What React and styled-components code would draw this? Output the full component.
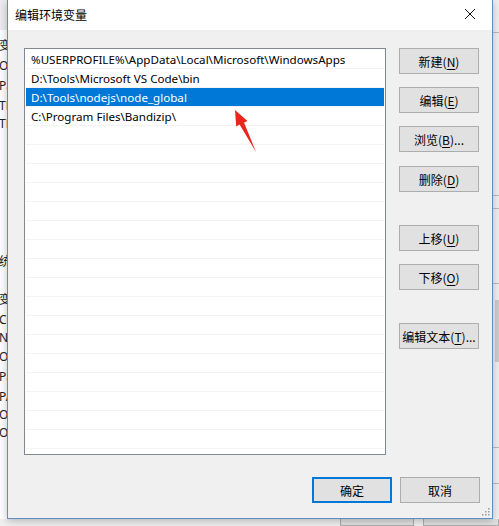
import React from 'react';
import styled, { createGlobalStyle } from 'styled-components';

const Global = createGlobalStyle`
  html, body { margin: 0; padding: 0; }
  body {
    width: 499px;
    height: 526px;
    overflow: hidden;
    background: #f0f0f0;
    font-family: "Noto Sans", "Noto Sans CJK SC", sans-serif;
  }
`;

const PATHS = [
  '%USERPROFILE%\\AppData\\Local\\Microsoft\\WindowsApps',
  'D:\\Tools\\Microsoft VS Code\\bin',
  'D:\\Tools\\nodejs\\node_global',
  'C:\\Program Files\\Bandizip\\',
];

// fragments of the window behind the dialog, cut by the dialog's left edge
const SIDE_TEXT = [
  { top: 38, t: '变' }, { top: 58, t: 'O' }, { top: 78, t: 'Pa' },
  { top: 98, t: 'TE' }, { top: 116, t: 'TM' },
  { top: 254, t: '统' }, { top: 292, t: '变' }, { top: 312, t: 'Co' },
  { top: 330, t: 'N' }, { top: 349, t: 'O' }, { top: 369, t: 'Pa' },
  { top: 389, t: 'PA' }, { top: 407, t: 'OF' }, { top: 425, t: 'OF' },
];

const Desktop = styled.div`
  position: relative;
  width: 499px;
  height: 526px;
  display: grid;
  grid-template-columns: 7px 486px 6px;
  grid-template-rows: 519px 7px;
  overflow: hidden;
`;

const LeftStrip = styled.div`
  position: relative;
  background: #fff;
  overflow: hidden;
  border-top: 30px solid #ececec;
  box-sizing: border-box;
  font-size: 12px;
  color: #222;
  & span {
    position: absolute;
    left: -1px;
    white-space: nowrap;
    line-height: 16px;
  }
`;

const RightStrip = styled.div`
  position: relative;
  background: #f0f0f0;
  overflow: hidden;
`;

const StripLine = styled.div`
  height: 1px;
  background: #bcbcbc;
  margin-top: ${(p) => p.$gap}px;
`;

const Thumb = styled.div`
  margin: 16px 0 0 2px;
  width: 4px;
  height: 62px;
  background: #cdcdcd;
`;

const BottomStrip = styled.div`
  grid-column: 1 / 4;
  background: #f0f0f0;
  display: flex;
  padding-left: 340px;
  gap: 9px;
`;

const GhostButton = styled.div`
  width: ${(p) => p.$w}px;
  height: 6px;
  border: 1px solid #adadad;
  border-top: none;
  background: #e1e1e1;
`;

const Dialog = styled.div`
  position: relative;
  box-sizing: border-box;
  border: 1px solid #5d8fc4;
  border-top: none;
  background: #f0f0f0;
  display: flex;
  flex-direction: column;
  box-shadow: 0 2px 8px rgba(0, 0, 0, 0.25);
  z-index: 1;
`;

const TitleBar = styled.div`
  height: 30px;
  background: #fff;
  display: flex;
  align-items: center;
  justify-content: space-between;
  padding: 0 8px 2px 7px;
  box-sizing: border-box;
`;

const Title = styled.div`
  font-family: "Noto Sans CJK SC", sans-serif;
  font-size: 12px;
  color: #000;
`;

const Close = styled.div`
  width: 28px;
  height: 24px;
  display: flex;
  align-items: center;
  justify-content: center;
`;

const Body = styled.div`
  display: flex;
  gap: 13px;
  padding: 18px 0 0 16px;
`;

const List = styled.div`
  width: 362px;
  height: 407px;
  box-sizing: border-box;
  border: 1px solid #828790;
  background: #fff;
  padding: 1px;
  overflow: hidden;
`;

const Row = styled.div`
  height: 19px;
  box-sizing: border-box;
  border-bottom: 1px solid #f3f3f3;
  padding-left: 5px;
  display: flex;
  align-items: center;
  font-size: 11.6px;
  white-space: nowrap;
  color: ${(p) => (p.$selected ? '#fff' : '#000')};
  background: ${(p) => (p.$selected ? '#0078d7' : 'transparent')};
`;

const ButtonColumn = styled.div`
  display: flex;
  flex-direction: column;
`;

const Button = styled.div`
  width: 80px;
  height: 26px;
  box-sizing: border-box;
  margin-top: ${(p) => p.$mt || 0}px;
  border: ${(p) => (p.$default ? '2px solid #0078d7' : '1px solid #adadad')};
  background: #e1e1e1;
  display: flex;
  align-items: center;
  justify-content: center;
  font-family: "Noto Sans CJK SC", sans-serif;
  font-size: 12px;
  color: #000;
  & u { text-underline-offset: 2px; }
`;

const Footer = styled.div`
  display: flex;
  justify-content: flex-end;
  gap: 8px;
  padding: 22px 12px 0 0;
`;

const Grip = styled.svg`
  position: absolute;
  right: 2px;
  bottom: 2px;
`;

const Arrow = styled.svg`
  position: absolute;
  left: 0;
  top: 0;
  pointer-events: none;
  z-index: 2;
`;

function Btn({ label, k, tail = '', ...rest }) {
  return (
    <Button {...rest}>
      {label}
      {k && (
        <>
          (<u>{k}</u>){tail}
        </>
      )}
    </Button>
  );
}

export default function App() {
  const rows = Array.from({ length: 22 }, (_, i) => PATHS[i] || '');
  return (
    <>
      <Global />
      <Desktop>
        <LeftStrip>
          {SIDE_TEXT.map((s, i) => (
            <span key={i} style={{ top: s.top - 30 }}>{s.t}</span>
          ))}
        </LeftStrip>
        <Dialog>
          <TitleBar>
            <Title>编辑环境变量</Title>
            <Close>
              <svg width="12" height="12" viewBox="0 0 12 12">
                <path d="M1 1 L11 11 M11 1 L1 11" stroke="#111" strokeWidth="1" />
              </svg>
            </Close>
          </TitleBar>
          <Body>
            <List>
              {rows.map((r, i) => (
                <Row key={i} $selected={i === 2}>{r}</Row>
              ))}
            </List>
            <ButtonColumn>
              <Btn label="新建" k="N" />
              <Btn label="编辑" k="E" $mt={13} />
              <Btn label="浏览" k="B" tail="..." $mt={13} />
              <Btn label="删除" k="D" $mt={14} />
              <Btn label="上移" k="U" $mt={33} />
              <Btn label="下移" k="O" $mt={13} />
              <Btn label="编辑文本" k="T" tail="..." $mt={33} />
            </ButtonColumn>
          </Body>
          <Footer>
            <Btn label="确定" $default />
            <Btn label="取消" />
          </Footer>
          <Grip width="10" height="10" viewBox="0 0 10 10">
            {[[8, 2], [5, 5], [8, 5], [2, 8], [5, 8], [8, 8]].map(([x, y], i) => (
              <rect key={i} x={x} y={y} width="1.5" height="1.5" fill="#9a9a9a" />
            ))}
          </Grip>
        </Dialog>
        <RightStrip>
          <StripLine $gap={32} />
          <StripLine $gap={162} />
          <StripLine $gap={12} />
          <StripLine $gap={74} />
          <Thumb />
          <StripLine $gap={85} />
          <StripLine $gap={35} />
        </RightStrip>
        <BottomStrip>
          <GhostButton $w={78} />
          <GhostButton $w={80} />
        </BottomStrip>
        <Arrow width="499" height="526" viewBox="0 0 499 526">
          <polygon
            points="235,110 247.5,121 244,122.6 256,152 239.6,124.6 236.2,126.5"
            fill="#e8261c"
          />
        </Arrow>
      </Desktop>
    </>
  );
}
